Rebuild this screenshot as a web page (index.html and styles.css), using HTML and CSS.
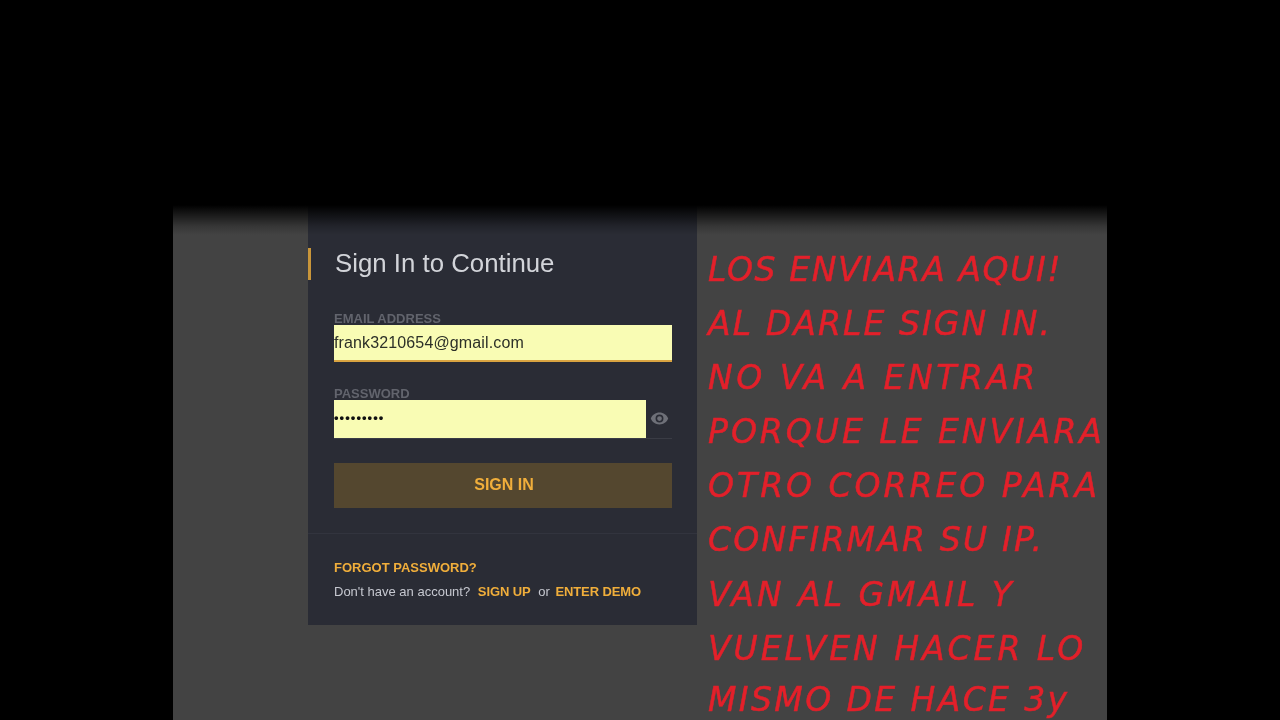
FILE: index.html
```html
<!DOCTYPE html>
<html lang="es">
<head>
<meta charset="utf-8">
<title>Sign In to Continue</title>
<link rel="stylesheet" href="styles.css">
</head>
<body>
<main class="stage">
  <section class="card">
    <div class="card-main">
      <h1 class="title">Sign In to Continue</h1>
      <div class="label label-email">EMAIL ADDRESS</div>
      <div class="input input-email">frank3210654@gmail.com</div>
      <div class="label label-pass">PASSWORD</div>
      <div class="pass-row">
        <div class="input input-pass">•••••••••</div>
        <div class="eye-cell">
          <svg class="eye" viewBox="0 0 24 24" width="19" height="19"><path fill="#6e7078" d="M12 4.500C7 4.500 2.700 7.600 1 12c1.700 4.400 6 7.500 11 7.500s9.300-3.100 11-7.500c-1.700-4.400-6-7.500-11-7.500zM12 17a5 5 0 1 1 0-10 5 5 0 0 1 0 10zm0-8a3 3 0 1 0 0 6 3 3 0 0 0 0-6z"/></svg>
        </div>
      </div>
      <div class="button">SIGN IN</div>
    </div>
    <div class="card-foot">
      <div class="forgot">FORGOT PASSWORD?</div>
      <div class="account">Don't have an account? <span class="link link-up">SIGN UP</span> or <span class="link link-demo">ENTER DEMO</span></div>
    </div>
  </section>
  <section class="note">
    <p class="ls-16">LOS ENVIARA AQUI!</p>
    <p class="ls-21">AL DARLE SIGN IN.</p>
    <p class="ls-35">NO VA A ENTRAR</p>
    <p class="ls-30">PORQUE LE ENVIARA</p>
    <p class="ls-30">OTRO CORREO PARA</p>
    <p class="ls-22">CONFIRMAR SU IP.</p>
    <p class="ls-30">VAN AL GMAIL Y</p>
    <p class="ls-30">VUELVEN HACER LO</p>
    <p class="ls-24">MISMO DE HACE 3y</p>
  </section>
</main>
</body>
</html>
```

FILE: styles.css
```css
html, body {
  margin: 0;
  height: 720px;
  overflow: hidden;
  background: #000;
}
body {
  padding: 205px 173px 0;
  box-sizing: border-box;
  font-family: "Liberation Sans", Arial, sans-serif;
}
.stage {
  position: relative;
  display: flex;
  align-items: flex-start;
  width: 934px;
  height: 515px;
  overflow: hidden;
  background: #434343;
  filter: blur(0.4px);
}
.stage::before {
  content: "";
  position: absolute;
  left: 0;
  right: 0;
  top: 0;
  height: 30px;
  background: linear-gradient(#000 0%, rgba(0,0,0,0.65) 30%, rgba(0,0,0,0.2) 70%, rgba(0,0,0,0) 100%);
  z-index: 2;
}
.card {
  flex: none;
  width: 389px;
  height: 420px;
  margin-left: 135px;
  background: #2a2c35;
  box-sizing: border-box;
}
.card-main {
  height: 329px;
  box-sizing: border-box;
  padding: 43px 25px 0 26px;
  border-bottom: 1px solid #32343e;
}
.title {
  margin: 0 0 0 -26px;
  padding-left: 24px;
  border-left: 3px solid #c9963a;
  height: 32px;
  font-size: 25.8px;
  line-height: 30px;
  font-weight: 400;
  color: #d2d4d9;
}
.label {
  font-size: 13px;
  line-height: 14px;
  font-weight: 700;
  color: #62646d;
}
.label-email { margin-top: 32px; height: 13px; }
.label-pass { margin-top: 25px; height: 13px; }
.input {
  box-sizing: border-box;
  height: 38px;
  background: #f9fcb4;
  font-size: 16px;
  line-height: 36px;
  letter-spacing: 0.13px;
  color: #2c3028;
}
.input-email {
  height: 37px;
  border-bottom: 2px solid #d9a441;
}
.pass-row {
  display: flex;
  height: 38px;
  border-bottom: 1px solid #3a3c45;
}
.input-pass {
  width: 312px;
  font-size: 13px;
  font-weight: 700;
  line-height: 36px;
  letter-spacing: 1.05px;
  color: #111;
}
.eye-cell {
  flex: 1;
  display: flex;
  align-items: center;
  justify-content: center;
  padding-bottom: 2px;
}
.button {
  height: 45px;
  margin-top: 24px;
  background: #54472f;
  color: #f0ae3b;
  font-size: 16px;
  font-weight: 700;
  line-height: 44px;
  text-align: center;
  padding-left: 2px;
}
.card-foot {
  padding: 26px 0 0 26px;
  font-size: 13px;
}
.forgot {
  color: #f0ae3b;
  font-weight: 700;
  line-height: 16px;
}
.account {
  margin-top: 8px;
  line-height: 16px;
  color: #c6c8d0;
  font-size: 13px;
  white-space: nowrap;
}
.link {
  color: #f0ae3b;
  font-weight: 700;
  letter-spacing: -0.1px;
}
.link-up { margin: 0 4px; }
.link-demo { margin-left: 2px; }
.note {
  flex: none;
  margin-left: 11px;
  padding-top: 48px;
  color: #e3202a;
  font-family: "DejaVu Sans", sans-serif;
  font-style: italic;
  font-size: 33px;
  line-height: 34px;
  white-space: nowrap;
  -webkit-text-stroke: 0.5px #e3202a;
}
.note p {
  margin: 0 0 20.1px;
}
.note p:nth-last-child(2) {
  margin-bottom: 17.5px;
}
.ls-16 { letter-spacing: 1.6px; }
.ls-21 { letter-spacing: 2.1px; }
.ls-22 { letter-spacing: 2.2px; }
.ls-24 { letter-spacing: 2.4px; }
.ls-30 { letter-spacing: 3px; }
.ls-35 { letter-spacing: 3.5px; }
```
